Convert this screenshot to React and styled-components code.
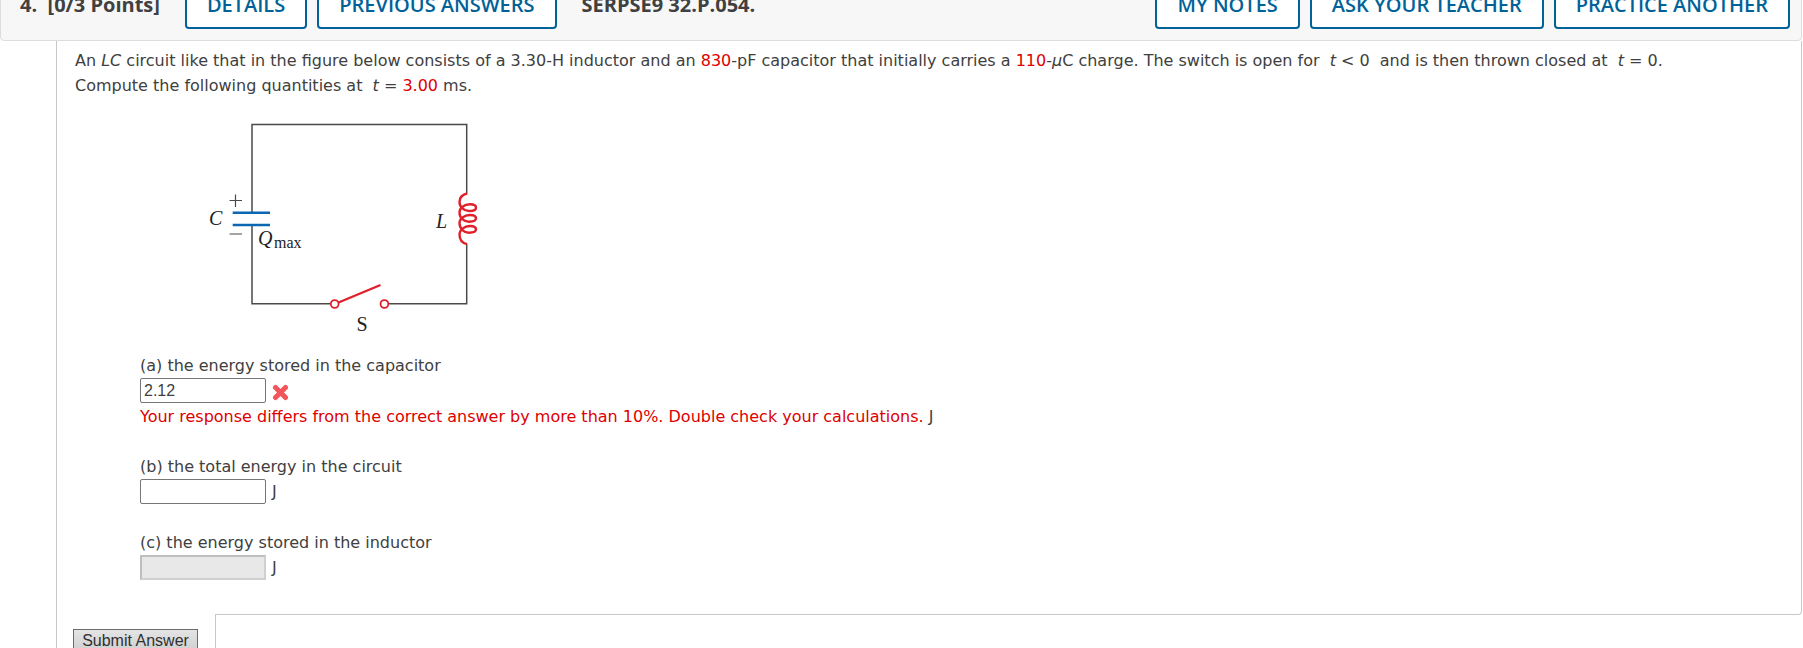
import React, { useState } from 'react';
import styled, { createGlobalStyle } from 'styled-components';

const GlobalStyle = createGlobalStyle`
  body {
    margin: 0;
    background-color: #fff;
    overflow: hidden;
  }
`;

const Page = styled.main`
  padding-right: 1px;
  color: #404040;
  font-family: Verdana, 'DejaVu Sans', sans-serif;
  font-size: 16px;
  line-height: 25px;
`;

/* the bar is partly scrolled off the top of the window */
const Header = styled.header`
  display: flex;
  align-items: center;
  gap: 10px;
  margin-top: -32px;
  padding: 11px 11px 11px 19px;
  background-color: #f7f7f7;
  border: 1px solid #ddd;
  border-radius: 4px;
  font-family: 'Open Sans', sans-serif;
`;

const Title = styled.h2`
  margin: 0;
  font-size: 20px;
  font-weight: 700;
  white-space: pre;
`;

const Points = styled(Title)`
  margin-right: 15px;
`;

const Code = styled(Title)`
  flex: 1;
  margin-left: 15px;
`;

const HeaderButton = styled.button`
  height: 49px;
  padding: 0 20px;
  background-color: #fff;
  border: 2px solid #006298;
  border-radius: 4px;
  color: #006298;
  font-family: inherit;
  font-size: 20px;
  font-weight: 600;
  white-space: nowrap;
  cursor: pointer;
`;

const Content = styled.section`
  margin-left: 56px;
  border-left: 1px solid #c8c8c8;
`;

const Question = styled.div`
  padding: 7px 18px 33px;
  border-right: 1px solid #c8c8c8;
  border-bottom: 1px solid #c8c8c8;
  border-bottom-right-radius: 4px;
`;

const Prompt = styled.p`
  margin: 0;
`;

const Random = styled.span`
  color: #d00;
`;

const Formula = styled.span`
  margin: 0 5px;
  white-space: nowrap;
`;

const Figure = styled.svg`
  display: block;
  margin: 15px 0 16px 130px;
  background-color: #fefffe;
  font-family: 'Liberation Serif', serif;
  font-size: 20px;
`;

const Parts = styled.div`
  display: flex;
  flex-direction: column;
  gap: 25px;
  margin-left: 65px;
`;

const PartLabel = styled.label`
  display: block;
`;

const AnswerRow = styled.div`
  display: flex;
  align-items: flex-start;
  gap: 6px;
  height: 26px;
`;

const Answer = styled.input`
  box-sizing: border-box;
  width: 126px;
  height: 25px;
  padding: 1px 3px;
  background-color: #fff;
  border: 1px solid #767676;
  border-radius: 2px;
  color: #404040;
  font-family: 'Liberation Sans', Arial, sans-serif;
  font-size: 16px;

  &:disabled {
    background-color: #e8e8e8;
    border: 2px solid;
    border-color: #bebebe #d0d0d0 #d0d0d0 #bebebe;
    border-radius: 0;
  }
`;

const WrongMark = styled.svg`
  margin-top: 6px;
`;

const Feedback = styled.div`
  color: #d00;
`;

const Unit = styled.span`
  color: #404040;
`;

const SubmitCell = styled.div`
  box-sizing: border-box;
  width: 159px;
  margin-top: -1px;
  padding: 15px 16px 20px;
  background-color: #fff;
  border-right: 1px solid #c8c8c8;
`;

const SubmitButton = styled.button`
  display: block;
  width: 125px;
  height: 23px;
  padding: 0;
  background-image: linear-gradient(#e4e4e4, #d0d0d0);
  border: 1px solid #6c6c6c;
  border-radius: 0;
  color: #303030;
  font-family: 'Liberation Sans', Arial, sans-serif;
  font-size: 16px;
  cursor: pointer;
`;

const Circuit = () => (
  <Figure width="275" height="224" viewBox="0 0 275 224" role="img" aria-label="LC circuit with a switch">
    <g fill="none" stroke="#4a4a4a" strokeWidth="1.5">
      <path d="M47 99V11.5H261.7V81" />
      <path d="M47 113V190.7H126" />
      <path d="M183 190.7H261.7V131" />
      <path d="M24.5 87.5H37M30.5 81.5V94M24.5 121H37" strokeWidth="1.2" />
    </g>
    <path d="M27.7 99.7H65M27.7 112H65" stroke="#0b67b2" strokeWidth="2.6" />
    <g fill="none" stroke="#e0202b" strokeWidth="2.4">
      <path
        d="M262 80.5C256 82 254.5 86 254.5 89
          C254.5 94 259 98 264 98C269 98 271 97 271 94.7C271 92 268 91.3 265 91.3C259 91.3 254.5 95 254.5 99.5
          C254.5 105 259 108.7 264 108.7C269 108.7 271 107.7 271 105.3C271 103 268 102 265 102C259 102 254.5 106 254.5 110
          C254.5 116 259 119.7 264 119.7C269 119.7 271 118.7 271 116.3C271 114 268 113 265 113C259 113 254.5 117 254.5 121.5
          C254.5 127 257 130 262 131.2"
      />
      <circle cx="129.7" cy="191" r="3.9" strokeWidth="1.8" />
      <circle cx="179.4" cy="191" r="3.9" strokeWidth="1.8" />
      <path d="M133.5 189.5L175.5 172" />
    </g>
    <g fill="#222">
      <text x="4" y="112" fontStyle="italic">C</text>
      <text x="231" y="115" fontStyle="italic">L</text>
      <text x="53" y="132" fontStyle="italic">Q</text>
      <text x="69" y="135" fontSize="16">max</text>
      <text x="157" y="218" textAnchor="middle">S</text>
    </g>
  </Figure>
);

const App = () => {
  const [answers, setAnswers] = useState({ a: '2.12', b: '', c: '' });

  const onAnswer = (e) => {
    setAnswers({ ...answers, [e.target.id]: e.target.value });
  };

  return (
    <Page>
      <GlobalStyle />
      <Header>
        <Points>4.  [0/3 Points]</Points>
        <HeaderButton>DETAILS</HeaderButton>
        <HeaderButton>PREVIOUS ANSWERS</HeaderButton>
        <Code>SERPSE9 32.P.054.</Code>
        <HeaderButton>MY NOTES</HeaderButton>
        <HeaderButton>ASK YOUR TEACHER</HeaderButton>
        <HeaderButton>PRACTICE ANOTHER</HeaderButton>
      </Header>

      <Content>
        <Question>
          <Prompt>
            An <i>LC</i> circuit like that in the figure below consists of a 3.30-H inductor and an{' '}
            <Random>830</Random>-pF capacitor that initially carries a <Random>110</Random>-<i>µ</i>C charge.
            The switch is open for <Formula><i>t</i> &lt; 0</Formula> and is then thrown closed at{' '}
            <Formula><i>t</i> = 0.</Formula>
            <br />
            Compute the following quantities at{' '}
            <Formula><i>t</i> = <Random>3.00</Random> ms.</Formula>
          </Prompt>

          <Circuit />

          <Parts>
            <div>
              <PartLabel htmlFor="a">(a) the energy stored in the capacitor</PartLabel>
              <AnswerRow>
                <Answer id="a" value={answers.a} onChange={onAnswer} />
                <WrongMark width="17" height="18" viewBox="0 0 17 18" role="img" aria-label="incorrect">
                  <path d="M3.5 3.5L13.5 13.5M13.5 3.5L3.5 13.5" stroke="#f4555a" strokeWidth="5" strokeLinecap="round" />
                </WrongMark>
              </AnswerRow>
              <Feedback>
                Your response differs from the correct answer by more than 10%. Double check your calculations.{' '}
                <Unit>J</Unit>
              </Feedback>
            </div>
            <div>
              <PartLabel htmlFor="b">(b) the total energy in the circuit</PartLabel>
              <AnswerRow>
                <Answer id="b" value={answers.b} onChange={onAnswer} />
                <Unit>J</Unit>
              </AnswerRow>
            </div>
            <div>
              <PartLabel htmlFor="c">(c) the energy stored in the inductor</PartLabel>
              <AnswerRow>
                <Answer id="c" value={answers.c} onChange={onAnswer} disabled />
                <Unit>J</Unit>
              </AnswerRow>
            </div>
          </Parts>
        </Question>
        <SubmitCell>
          <SubmitButton>Submit Answer</SubmitButton>
        </SubmitCell>
      </Content>
    </Page>
  );
};

export default App;
